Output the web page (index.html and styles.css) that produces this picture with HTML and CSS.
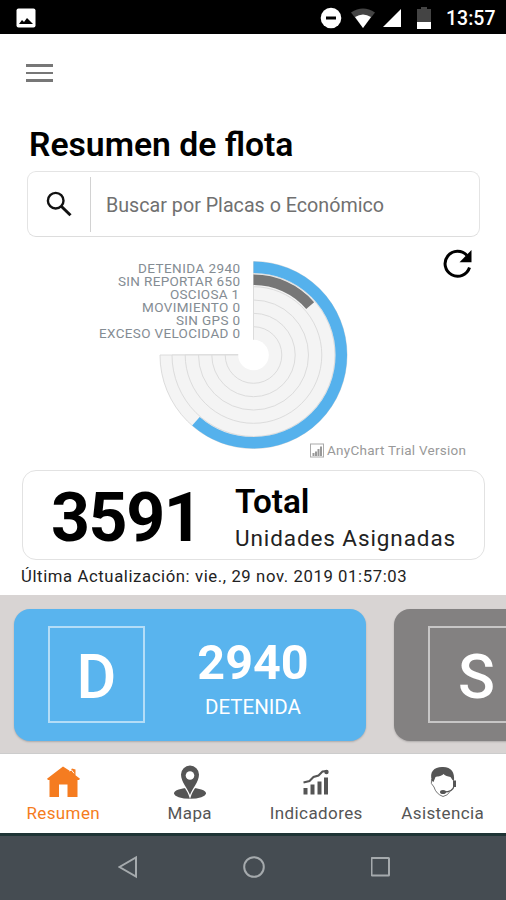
FILE: index.html
```html
<!DOCTYPE html>
<html lang="es">

<head>
    <meta charset="UTF-8">
    <meta name="viewport" content="width=device-width, initial-scale=1.0">
    <title>Resumen de flota</title>
    <link rel="stylesheet" href="styles.css">
</head>

<body>
    <div class="status-bar">
        <svg class="status-photo" width="20" height="20" viewBox="0 0 20 20">
            <rect x="0.5" y="0.5" width="19" height="19" rx="2" fill="#fff"/>
            <path d="M3 16l3-4 2 2 3-4 2 2 4 4z" fill="#000"/>
        </svg>
        <svg width="22" height="22" viewBox="0 0 22 22">
            <circle cx="11" cy="11" r="10.300" fill="#fff"/>
            <rect x="6" y="9.500" width="10" height="3" fill="#000"/>
        </svg>
        <svg class="status-wifi" width="24" height="20" viewBox="0 0 24 20">
            <path d="M0 4.500Q12-3.500 24 4.500L12 20z" fill="#444"/>
            <path d="M4 9Q12 3.800 20 9L12 20z" fill="#fff"/>
        </svg>
        <svg class="status-signal" width="18" height="18" viewBox="0 0 18 18">
            <path d="M18 0v18H0z" fill="#fff"/>
        </svg>
        <svg class="status-battery" width="14" height="22" viewBox="0 0 14 22">
            <path d="M4 0h6v2h4v13H0V2h4z" fill="#444"/>
            <path d="M0 15h14v7H0z" fill="#fff"/>
        </svg>
        <span class="clock">13:57</span>
    </div>

    <div class="content">
        <div class="menu">
            <span></span>
            <span></span>
            <span></span>
        </div>
        <h1>Resumen de flota</h1>
        <div class="search">
            <svg class="search-icon" width="26" height="26" viewBox="0 0 26 26" fill="none" stroke="#111">
                <circle cx="9.700" cy="9.700" r="7.800" stroke-width="2.400"/>
                <path d="M15.500 15.500l9 8.800" stroke-width="3"/>
            </svg>
            <span class="search-text">Buscar por Placas o Económico</span>
        </div>

        <div class="chart">
            <svg width="506" height="232" viewBox="0 0 506 232">
                <g transform="translate(253.500 117)">
                    <g class="tracks">
                        <path d="M0 0V-93.500A93.500 93.500 0 1 1-93.500 0z"/>
                        <path d="M0 0V-81.500A81.500 81.500 0 1 1-81.500 0z"/>
                        <path d="M0 0V-68.300A68.300 68.300 0 1 1-68.300 0z"/>
                        <path d="M0 0V-55A55 55 0 1 1-55 0z"/>
                        <path d="M0 0V-41.700A41.700 41.700 0 1 1-41.700 0z"/>
                        <path d="M0 0V-28.300A28.300 28.300 0 1 1-28.300 0z"/>
                    </g>
                    <circle r="15.300" fill="#fff"/>
                    <circle class="bar bar-blue" r="87.800" pathLength="360" stroke-dasharray="221 360"/>
                    <circle class="bar bar-gray" r="75.200" pathLength="360" stroke-dasharray="48.900 360"/>
                </g>
                <g class="labels">
                    <text x="240" y="34.500" textLength="102">DETENIDA 2940</text>
                    <text x="240" y="47.700" textLength="122">SIN REPORTAR 650</text>
                    <text x="239" y="61.300" textLength="69">OSCIOSA 1</text>
                    <text x="240" y="74.300" textLength="98">MOVIMIENTO 0</text>
                    <text x="240" y="87.300" textLength="64">SIN GPS 0</text>
                    <text x="240" y="100.300" textLength="141">EXCESO VELOCIDAD 0</text>
                </g>
                <g transform="translate(310 205.500)">
                    <rect x="0.500" y="0.500" width="13" height="13" fill="none" stroke="#aaa"/>
                    <path d="M2.500 9.500h2v3h-2zM5 8h2v4.500h-2zM7.500 5.500h2v7h-2zM10 3h2v9.500h-2z" fill="#999"/>
                </g>
                <text class="credit" x="327" y="216.500" textLength="139">AnyChart Trial Version</text>
                <g transform="translate(443 12)">
                    <path d="M26.500 17.500A12.500 12.500 0 1 1 24 5.500" fill="none" stroke="#000" stroke-width="3"/>
                    <path d="M28.500 0v12.300H16.500z" fill="#000"/>
                </g>
            </svg>
        </div>

        <div class="total">
            <div class="total-number">3591</div>
            <div class="total-text">
                <div class="total-title">Total</div>
                <div class="total-sub">Unidades Asignadas</div>
            </div>
        </div>
        <div class="updated">Última Actualización: vie., 29 nov. 2019 01:57:03</div>
    </div>

    <div class="cards">
        <div class="card card-blue">
            <div class="letter">D</div>
            <div class="card-info">
                <div class="card-number">2940</div>
                <div class="card-name">DETENIDA</div>
            </div>
        </div>
        <div class="card card-gray">
            <div class="letter">S</div>
        </div>
    </div>

    <div class="tabs">
        <div class="tab active">
            <svg width="34" height="36" viewBox="0 0 34 36" fill="#f57c20">
                <path d="M17 2.500L1 14.800l1 1.200h1.500V33h9.500V20.500h8.500V33h10V16H33l1-1.200-4.500-3.600V5.500L26 4.500l-2 2.600z"/>
                <path d="M23.500 7l2-1 2.500 3.300" fill="none" stroke="#fff"/>
            </svg>
            <span>Resumen</span>
        </div>
        <div class="tab">
            <svg width="34" height="36" viewBox="0 0 34 36" fill="#555">
                <ellipse cx="17" cy="29.300" rx="16" ry="5.500"/>
                <path d="M17 31C15 25 8 18 8 10.500a9 9 0 0 1 18 0C26 18 19 25 17 31z" stroke="#fff" stroke-width="2.500"/>
                <path d="M17 31C15 25 8 18 8 10.500a9 9 0 0 1 18 0C26 18 19 25 17 31z"/>
                <circle cx="17" cy="11.500" r="4.300" fill="#fff"/>
            </svg>
            <span>Mapa</span>
        </div>
        <div class="tab">
            <svg width="28" height="36" viewBox="0 0 28 36" fill="#555">
                <path d="M1.500 24h4v6.500h-4zM8.500 20.500h4v10h-4zM15.500 17.500h4v13h-4zM22 13.500h4v17h-4z"/>
                <path d="M1.500 18.500l6-1.500 4-4 5-1.500 4-4 5-.5" fill="none" stroke="#555" stroke-width="2"/>
                <circle cx="24.500" cy="8" r="2.200"/>
            </svg>
            <span>Indicadores</span>
        </div>
        <div class="tab">
            <svg width="28" height="36" viewBox="0 0 28 36" fill="#555">
                <path d="M3 17C0 8 5 3 13 3c9-.5 13 5 12 14l-1.500-1-2-3c-3-.5-5-1-7-3-3 3-6 2-8 3l-2 5z"/>
                <path d="M2.500 15q-1.500 5 2.500 8 2 7 9 9.500 5-1 7-5" fill="none" stroke="#777"/>
                <path d="M24 16.500h3v6.500h-3z"/>
                <path d="M25 22q-1 6-10 6" fill="none" stroke="#555" stroke-width="1.300"/>
                <ellipse cx="14" cy="28" rx="3" ry="2"/>
            </svg>
            <span>Asistencia</span>
        </div>
    </div>

    <div class="nav-bar">
        <svg width="20" height="24" viewBox="0 0 20 24">
            <path d="M18 2.500v19L1.500 12z"/>
        </svg>
        <svg width="24" height="24" viewBox="0 0 24 24">
            <circle cx="11" cy="12" r="9.800"/>
        </svg>
        <svg width="20" height="24" viewBox="0 0 20 24">
            <rect x="0.5" y="3" width="17.500" height="17.500" rx="0.500"/>
        </svg>
    </div>
</body>

</html>
```
FILE: styles.css
```css
* {
    box-sizing: border-box;
}

body {
    margin: 0;
    width: 506px;
    height: 900px;
    overflow: hidden;
    display: flex;
    flex-direction: column;
    font-family: Roboto, sans-serif;
    background-color: #fff;
    color: #000;
}

svg {
    display: block;
    flex-shrink: 0;
}

.status-bar {
    height: 34px;
    background-color: #000;
    color: #fff;
    display: flex;
    align-items: center;
    padding: 1px 11px 0 16px;
}

.status-photo {
    margin-right: auto;
}

.status-wifi {
    margin-left: 9px;
}

.status-signal {
    margin-left: 8px;
}

.status-battery {
    margin-left: 16px;
}

.clock {
    width: 49px;
    margin-left: 15px;
    padding-top: 2px;
    font-size: 19.5px;
    font-weight: 500;
    white-space: nowrap;
}

.content {
    height: 561px;
}

.menu {
    width: 27px;
    margin: 30px 0 0 26px;
    display: flex;
    flex-direction: column;
    gap: 5px;
}

.menu span {
    height: 2.5px;
    background-color: #777;
}

h1 {
    margin: 41px 0 0 29px;
    height: 44px;
    line-height: 44px;
    font-size: 33.7px;
    font-weight: 600;
    white-space: nowrap;
}

.search {
    margin: 4.5px 26px 0 27px;
    height: 66px;
    border: 1px solid #e4e4e4;
    border-bottom-color: #ddd;
    border-radius: 9px;
    display: flex;
    align-items: center;
}

.search-icon {
    margin-left: 18px;
    margin-top: -1px;
}

.search-text {
    height: 55px;
    line-height: 57px;
    margin-left: 18px;
    padding-left: 15px;
    border-left: 1px solid #d2d2d2;
    font-size: 19.7px;
    color: #707070;
    white-space: nowrap;
}

.chart {
    height: 232.5px;
    padding-top: 0.5px;
}

.tracks path {
    fill: #f4f4f4;
    stroke: #dcdcdc;
}

.bar {
    fill: none;
    transform: rotate(-90deg);
}

.bar-blue {
    stroke: #55b1ec;
    stroke-width: 11.5;
}

.bar-gray {
    stroke: #777;
    stroke-width: 10.5;
}

.labels {
    font-size: 13.5px;
    fill: #848c93;
    text-anchor: end;
}

.credit {
    font-size: 13.5px;
    fill: #999;
}

.total {
    margin: 0 21px 0 22px;
    height: 90px;
    border: 1px solid #e2e2e2;
    border-radius: 14px;
    display: flex;
}

.total-number {
    width: 184px;
    margin-left: 28px;
    line-height: 94px;
    font-size: 68px;
    font-weight: 700;
    letter-spacing: -1.4px;
}

.total-title {
    margin-top: 10px;
    line-height: 41px;
    font-size: 33.3px;
    font-weight: 600;
}

.total-sub {
    line-height: 33px;
    font-size: 22.5px;
    letter-spacing: 0.9px;
    color: #222;
    white-space: nowrap;
}

.updated {
    margin: 4px 0 0 21px;
    line-height: 26px;
    font-size: 16.7px;
    letter-spacing: 0.6px;
    color: #222;
    white-space: nowrap;
}

.cards {
    height: 159px;
    padding: 14px 0 0 14px;
    display: flex;
    gap: 28px;
    background-color: #d8d4d3;
    border-bottom: 1px solid #ccc;
    overflow: hidden;
}

.card {
    width: 352px;
    height: 132px;
    flex-shrink: 0;
    padding: 17px 0 0 34px;
    border-radius: 16px;
    display: flex;
    color: #fff;
    box-shadow: 0 1px 2px rgba(0, 0, 0, 0.2);
}

.card-blue {
    background-color: #59b4ee;
}

.card-gray {
    background-color: #838181;
}

.letter {
    width: 97px;
    height: 97px;
    border: 2px solid rgba(255, 255, 255, 0.55);
    line-height: 98px;
    text-align: center;
    font-size: 61px;
    font-weight: 500;
}

.card-info {
    width: 120px;
    margin-left: 48px;
    text-align: center;
}

.card-number {
    margin-top: 12px;
    line-height: 50px;
    font-size: 48.5px;
    font-weight: 700;
}

.card-name {
    margin-top: 6px;
    line-height: 26px;
    font-size: 20.5px;
}

.tabs {
    height: 79px;
    display: flex;
}

.tab {
    flex: 1;
    padding-top: 10px;
    display: flex;
    flex-direction: column;
    align-items: center;
    font-size: 17px;
    letter-spacing: 0.4px;
    line-height: 26px;
    color: #555;
}

.active {
    color: #f57c20;
}

.nav-bar {
    height: 67px;
    border-top: 3px solid #1e3435;
    padding: 0 115px 2px 118px;
    display: flex;
    justify-content: space-between;
    align-items: center;
    background-color: #454c52;
}

.nav-bar svg {
    fill: none;
    stroke: #a5aaad;
    stroke-width: 2;
}
```
